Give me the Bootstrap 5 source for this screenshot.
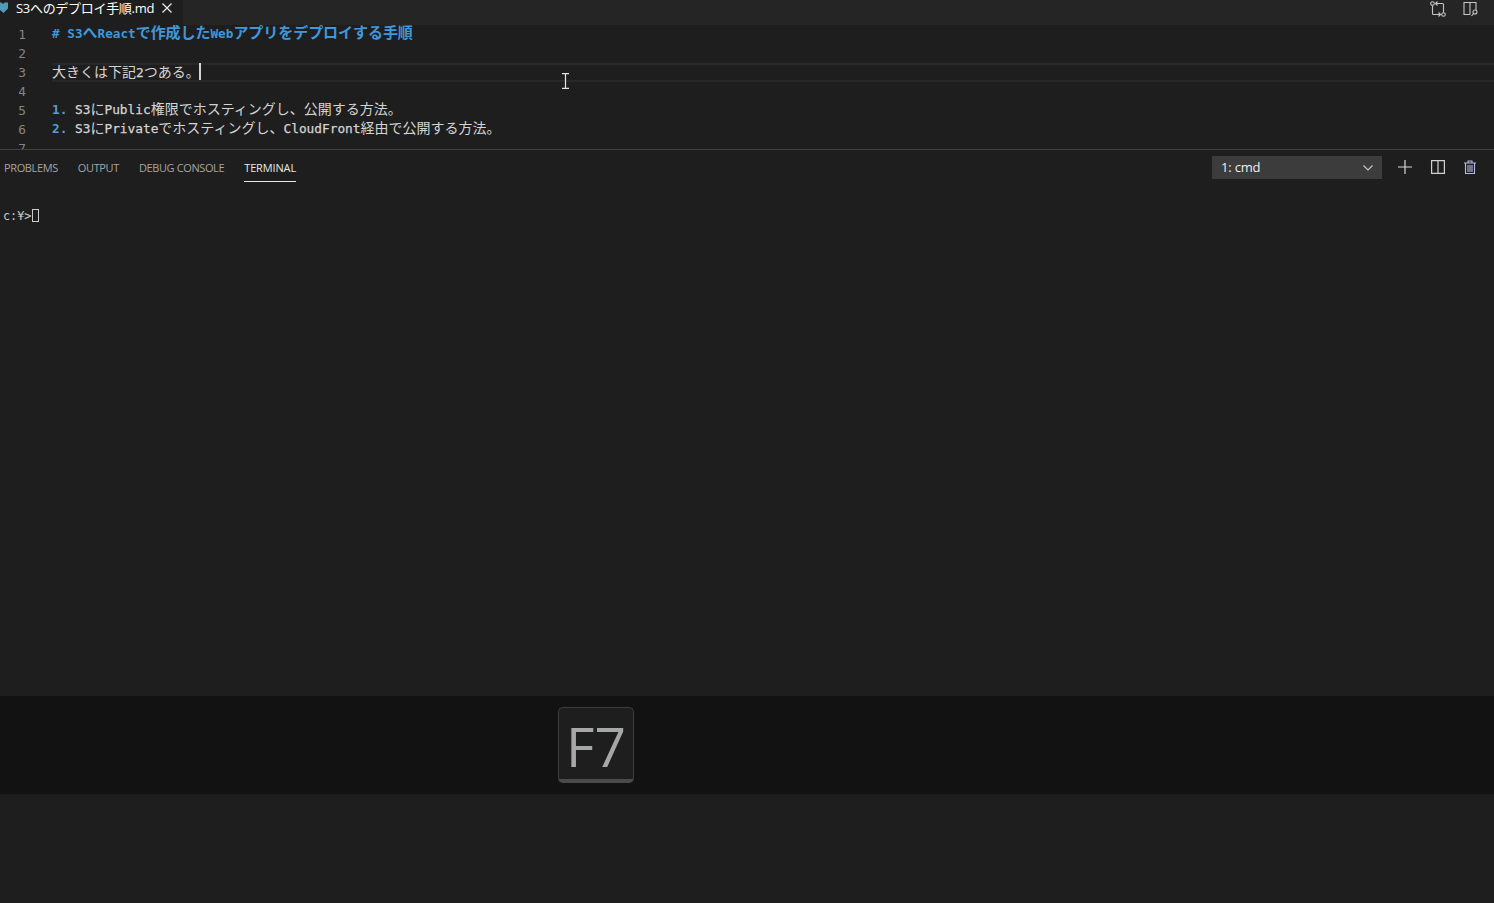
<!DOCTYPE html>
<html lang="ja">
<head>
<meta charset="utf-8">
<title>S3へのデプロイ手順.md</title>
<link href="https://cdn.jsdelivr.net/npm/bootstrap@5.3.0/dist/css/bootstrap.min.css" rel="stylesheet">
<style>
html,body{height:100%;margin:0;overflow:hidden}
body{background:#1e1e1e;color:#d4d4d4;font-family:"Liberation Sans","Noto Sans CJK JP",sans-serif}
.app-root{width:1494px;height:903px;position:relative}
.tab-strip{height:25px;background:#252526;flex:none;position:relative;z-index:1}
.active-tab{width:183px;background:#1e1e1e;color:#fff;height:25px}
.tab-name{font-family:"Open Sans","Noto Sans CJK JP",sans-serif;font-size:13px;line-height:16px;letter-spacing:-.3px;margin-left:7px}
.tab-close{margin-left:8px;margin-top:3px}
.strip-actions{gap:17px;padding-right:15px;padding-top:1px}
.md-icon{margin-left:-1px;margin-top:1px}
.editor-pane{height:129px;margin-top:-5px;padding-top:5px;flex:none;overflow:hidden;font-family:"Noto Sans CJK JP",sans-serif;font-size:14px}
.code-row{height:19px;line-height:19px;white-space:pre;display:flex}
.line-no{width:26px;text-align:right;flex:none;color:#858585;font-family:"DejaVu Sans Mono",monospace;font-size:12.8px}
.line-text{margin-left:26px;color:#d4d4d4;flex:1;line-height:15px}
.lt{font-family:"DejaVu Sans Mono",monospace;font-size:12.79px;color:#d4d4d4;-webkit-text-stroke:.25px}
.h-line{font-size:15px;letter-spacing:-.05px;line-height:14px}
.h-line,.h-line .lt{color:#3f98dc;font-weight:700}
.h-line .lt{font-size:12.7px;letter-spacing:0;-webkit-text-stroke:0}
.lt.num-mark{color:#569cd6;font-weight:700;-webkit-text-stroke:0}
.cur-row .line-text{border-top:2px solid #282828;border-bottom:2px solid #282828;line-height:13px;height:19px}
.caret-bar{display:inline-block;width:2px;height:17px;background:#d4d4d4;vertical-align:top;margin-top:-2px;margin-left:-1px}
.panel-head{height:36px;border-top:1px solid #414141;flex:none;padding-left:4px}
.panel-tab{font-family:"Open Sans",sans-serif;font-size:11px;letter-spacing:-.38px;color:#a5a5a5;margin-right:20px;height:25px;line-height:20px;margin-top:7px;padding-top:1px}
.panel-tab.on{color:#e7e7e7;border-bottom:1px solid #e7e7e7;letter-spacing:-.14px}
.term-select{width:170px;height:23px;background:#3c3c3c;color:#f0f0f0;font-family:"Open Sans",sans-serif;font-size:13px;letter-spacing:-.2px;padding:1px 8px 0 9px;margin-right:16px}
.panel-tools{gap:19px;padding-right:18px;margin-bottom:2px}
.term-body{height:511px;flex:none;padding:22px 0 0 3px;font-family:"DejaVu Sans Mono",monospace;font-size:11.8px;line-height:19px;color:#cccccc}
.term-box{display:inline-block;width:7px;height:13px;border:1px solid #cccccc;vertical-align:-2px;margin-left:1px}
.key-band{height:98px;background:#121212;flex:none;padding-left:558px}
.key-cap{width:76px;height:76px;background:#1e1e1e;border:1px solid #3d3d3d;border-bottom:4px solid #4a4a4a;border-radius:5px;color:#a6a8a8;font-family:"Open Sans",sans-serif;font-size:55px;line-height:1;padding-top:4px}
.mouse-beam{position:absolute;left:561px;top:73px}
</style>
</head>
<body>
<div class="app-root d-flex flex-column">
  <div class="tab-strip d-flex justify-content-between">
    <div class="active-tab d-flex align-items-start">
      <svg class="md-icon" width="10" height="13" viewBox="0 0 10 13"><path d="M0 1.500h2.500L4 3l1.500-1.500H9v6l-4.500 4.500L0 8z" fill="#519aba"/></svg>
      <span class="tab-name">S3へのデプロイ手順.md</span>
      <svg class="tab-close" width="10" height="10" viewBox="0 0 10 10"><path d="M.5.500l9 9M9.500.500l-9 9" stroke="#e8e8e8" stroke-width="1.300" fill="none"/></svg>
    </div>
    <div class="strip-actions d-flex align-items-start">
      <svg width="16" height="16" viewBox="0 0 16 16" fill="none" stroke="#c5c5c5" stroke-width="1.100"><circle cx="2.500" cy="2.500" r="1.800"/><circle cx="13.500" cy="13.500" r="1.800"/><path d="M2.500 4.500v8q0 1 1 1h7M8.500 11.500l2 2-2 2M13.500 11.500v-8q0-1-1-1h-7M7.500 .5l-2 2 2 2"/></svg>
      <svg width="16" height="16" viewBox="0 0 16 16" fill="none" stroke="#c5c5c5" stroke-width="1.100"><path d="M7 13.500H1V1.500h12v8M7 1.500v12"/><circle cx="12" cy="11" r="2"/><path d="M10.500 12.500L8.500 15"/></svg>
    </div>
  </div>

  <div class="editor-pane">
    <div class="code-row"><span class="line-no">1</span><span class="line-text h-line"><span class="lt"># S3</span>へ<span class="lt">React</span>で作成した<span class="lt">Web</span>アプリをデプロイする手順</span></div>
    <div class="code-row"><span class="line-no">2</span><span class="line-text"></span></div>
    <div class="code-row cur-row"><span class="line-no">3</span><span class="line-text">大きくは下記<span class="lt">2</span>つある。<span class="caret-bar"></span></span></div>
    <div class="code-row"><span class="line-no">4</span><span class="line-text"></span></div>
    <div class="code-row"><span class="line-no">5</span><span class="line-text"><span class="lt num-mark">1. </span><span class="lt">S3</span>に<span class="lt">Public</span>権限でホスティングし、公開する方法。</span></div>
    <div class="code-row"><span class="line-no">6</span><span class="line-text"><span class="lt num-mark">2. </span><span class="lt">S3</span>に<span class="lt">Private</span>でホスティングし、<span class="lt">CloudFront</span>経由で公開する方法。</span></div>
    <div class="code-row"><span class="line-no">7</span><span class="line-text"></span></div>
  </div>

  <div class="panel-head d-flex justify-content-between">
    <div class="d-flex align-items-start">
      <div class="panel-tab">PROBLEMS</div>
      <div class="panel-tab">OUTPUT</div>
      <div class="panel-tab">DEBUG CONSOLE</div>
      <div class="panel-tab on">TERMINAL</div>
    </div>
    <div class="d-flex align-items-center">
      <div class="term-select d-flex justify-content-between align-items-center">
        <span>1: cmd</span>
        <svg width="12" height="8" viewBox="0 0 12 8" fill="none" stroke="#c5c5c5" stroke-width="1.200"><path d="M1.500 1.500L6 6l4.500-4.500"/></svg>
      </div>
      <div class="panel-tools d-flex align-items-center">
        <svg width="14" height="14" viewBox="0 0 14 14" stroke="#d8d8d8" stroke-width="1.200"><path d="M0 7h14M7 0v14"/></svg>
        <svg width="14" height="14" viewBox="0 0 14 14" fill="none" stroke="#d0d0d0" stroke-width="1.200"><path d="M.6.6h12.800v12.800H.6zM7 .6v12.800"/></svg>
        <svg width="12" height="14" viewBox="0 0 12 14" fill="none" stroke="#b9b9e8" stroke-width="1.100"><path d="M0 3h12M4 3V1h4v2M1.500 3v10.500h9V3M4 5v7M6 5v7M8 5v7"/></svg>
      </div>
    </div>
  </div>

  <div class="term-body">c:¥&gt;<span class="term-box"></span></div>

  <div class="key-band d-flex align-items-center">
    <div class="key-cap d-flex align-items-center justify-content-center">F7</div>
  </div>

  <svg class="mouse-beam" width="9" height="16" viewBox="0 0 9 16" fill="none" stroke="#e4e4e4" stroke-width="1.200"><path d="M1 .6h7M1 15.400h7M4.500 .6v14.800"/></svg>
</div>
<script src="https://cdn.jsdelivr.net/npm/bootstrap@5.3.0/dist/js/bootstrap.bundle.min.js"></script>
</body>
</html>
